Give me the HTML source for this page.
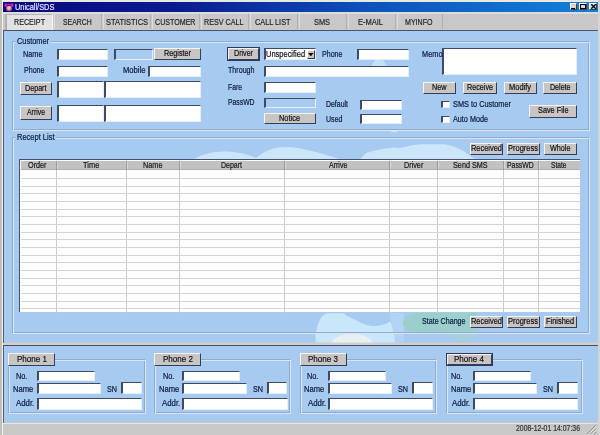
<!DOCTYPE html><html><head><meta charset="utf-8"><title>Unicall/SDS</title><style>
html,body{margin:0;padding:0;background:#c8c8c8;overflow:hidden}
#w{position:relative;width:600px;height:435px;overflow:hidden;font-family:"Liberation Sans",sans-serif}
#w div,#w svg,#w span{position:absolute}
#w span{white-space:nowrap;line-height:1;transform-origin:0 50%;display:block;filter:blur(0.3px);-webkit-text-stroke:0.2px currentColor}
</style></head><body><div id="w">
<div style="left:0px;top:0px;width:600px;height:435px;background:#c8c8c8;"></div>
<div style="left:0px;top:0px;width:600px;height:2px;background:#e8e8e4;"></div>
<div style="left:0px;top:0px;width:2px;height:435px;background:#c2beba;"></div>
<div style="left:2px;top:0px;width:1.2px;height:435px;background:#f2f2f2;"></div>
<div style="left:3px;top:2px;width:595.6px;height:10px;background:linear-gradient(90deg,#08087c 0%,#0a1c90 30%,#0c50b8 60%,#1480d8 100%);"></div>
<svg style="left:4px;top:3px;width:10px;height:9px" viewBox="0 0 10 9"><rect x="0.6" y="0.6" width="2.6" height="3.2" fill="#f010c8"/><rect x="6.6" y="0.6" width="2.6" height="3.2" fill="#f010c8"/><rect x="3.2" y="0.8" width="3.4" height="1.3" fill="#b828a8"/><ellipse cx="5" cy="5.5" rx="3.1" ry="2.8" fill="#a85098"/><circle cx="5" cy="5" r="1.9" fill="#e2c494"/></svg>
<div style="left:569.5px;top:3px;width:7.2px;height:7.2px;background:#d8d4d0;box-sizing:border-box;border-top:1px solid #fff;border-left:1px solid #fff;border-right:1px solid #404040;border-bottom:1px solid #404040;"></div>
<div style="left:579px;top:3px;width:7.8px;height:7.2px;background:#d8d4d0;box-sizing:border-box;border-top:1px solid #fff;border-left:1px solid #fff;border-right:1px solid #404040;border-bottom:1px solid #404040;"></div>
<div style="left:589px;top:3px;width:7.9px;height:7.2px;background:#d8d4d0;box-sizing:border-box;border-top:1px solid #fff;border-left:1px solid #fff;border-right:1px solid #404040;border-bottom:1px solid #404040;"></div>
<div style="left:571px;top:8px;width:3.5px;height:1.2px;background:#000;"></div>
<div style="left:580.3px;top:4.4px;width:5.4px;height:4.6px;box-sizing:border-box;border:0.9px solid #000;border-top:1.7px solid #000;"></div>
<svg style="left:590.5px;top:4.3px;width:5px;height:5px" viewBox="0 0 5 5"><path d="M0.3 0.3L4.7 4.7M4.7 0.3L0.3 4.7" stroke="#000" stroke-width="1.3"/></svg>
<div style="left:3px;top:12px;width:595px;height:19px;background:#c8c8c8;"></div>
<div style="left:3px;top:12px;width:595px;height:1.6px;background:#dcdcdc;"></div>
<div style="left:5.3px;top:14px;width:47.7px;height:16px;background:#e2e2e2;box-sizing:border-box;border-left:2px solid #b0b0b0;border-top:1px solid #b4b4b4;border-right:1px solid #f8f8f8;"></div>
<div style="left:54px;top:14px;width:48px;height:15px;box-sizing:border-box;border-right:1px solid #b0b0b0;border-left:1px solid #dcdcdc;"></div>
<div style="left:103px;top:14px;width:48px;height:15px;box-sizing:border-box;border-right:1px solid #b0b0b0;border-left:1px solid #dcdcdc;"></div>
<div style="left:152px;top:14px;width:48px;height:15px;box-sizing:border-box;border-right:1px solid #b0b0b0;border-left:1px solid #dcdcdc;"></div>
<div style="left:201px;top:14px;width:47.5px;height:15px;box-sizing:border-box;border-right:1px solid #b0b0b0;border-left:1px solid #dcdcdc;"></div>
<div style="left:249.5px;top:14px;width:48px;height:15px;box-sizing:border-box;border-right:1px solid #b0b0b0;border-left:1px solid #dcdcdc;"></div>
<div style="left:298.5px;top:14px;width:48.5px;height:15px;box-sizing:border-box;border-right:1px solid #b0b0b0;border-left:1px solid #dcdcdc;"></div>
<div style="left:348px;top:14px;width:47.7px;height:15px;box-sizing:border-box;border-right:1px solid #b0b0b0;border-left:1px solid #dcdcdc;"></div>
<div style="left:396.7px;top:14px;width:46px;height:15px;box-sizing:border-box;border-right:1px solid #b0b0b0;border-left:1px solid #dcdcdc;"></div>
<div style="left:3px;top:30.2px;width:595px;height:1.1px;background:#4c5464;"></div>
<div style="left:4px;top:31.3px;width:594px;height:311.2px;background:#a6caf0;"></div>
<div style="left:3.2px;top:31px;width:1.1px;height:314px;background:#545c74;"></div>
<svg style="left:4px;top:31px;width:594px;height:312px" viewBox="4 31 594 312">
<path d="M193 160 C200 155,212 151.5,223 151.5 C236 151.5,248 154,256 158 C264 151,274 147,285 147 C300 147,322 153,342 160 Z" fill="#cbe6f9"/>
<path d="M360 160 C363 155,367 152,371 151.5 C380 149,388 148,394 147.5 L400 148 C408 146.5,414 144.5,421 144.3 L445 144.3 C452 145.5,458 148,464 151.5 C469 154.5,472 157.5,476 160 Z" fill="#cbe6f9"/>
<path d="M371 66 L375 60 L383 60 L387 66 Z" fill="#c4e0f8"/>
<ellipse cx="394" cy="130.6" rx="5" ry="1.1" fill="#e2f0fc"/>
<path d="M390 313 L404 313 L404 342.5 L394 342.5 Z" fill="#b2d4f4"/>
<path d="M315.5 342.5 C315 335,316.5 328,318.5 323 C320.5 318,323 314.5,327.5 313.2 L344 313.2 L346 315.5 C348 316.5,350.5 317.5,353 318.8 C359 322,365 325,371 326 C378 326.5,385 324.5,390.6 321.5 C393 328,394.5 335,395 342.5 Z" fill="#c9e7fb"/>
<path d="M402.6 323 C403 317,410 313,424 312.6 L476 312.6 L476 333.5 C460 334,432 334,416 332.5 C408 331,402.6 328,402.6 323 Z" fill="#9ccfcc"/>
<path d="M446 333.5 L474 333.5 L474 339 C464 340,452 339,446 336 Z" fill="#a6d0dc"/>
<path d="M332 342.5 C334 337,342 334,352 334 C362 334,370 337,372.5 342.5 Z" fill="#eef0ec" opacity="0.85"/>
</svg>
<div style="left:12px;top:41px;width:577px;height:89px;box-sizing:border-box;border:1px solid #94aac8;"></div>
<div style="left:13px;top:42px;width:577px;height:89px;box-sizing:border-box;border:1px solid #d4e6f8;"></div>
<div style="left:15px;top:38px;width:36px;height:7px;background:#a6caf0;"></div>
<div style="left:56.5px;top:49px;width:51.5px;height:11px;background:#fff;box-sizing:border-box;border-top:1.6px solid #414a64;border-left:2px solid #414a64;border-right:1px solid #e6eef6;border-bottom:1px solid #e6eef6;"></div>
<div style="left:113.5px;top:49px;width:39px;height:11px;background:#a6caf0;box-sizing:border-box;border-top:1.6px solid #414a64;border-left:2px solid #414a64;border-right:1px solid #e6eef6;border-bottom:1px solid #e6eef6;"></div>
<div style="left:153.6px;top:47.5px;width:47.2px;height:12.5px;background:#c9c5c2;box-sizing:border-box;border-top:1px solid #f4f4f4;border-left:1px solid #f4f4f4;border-right:1.5px solid #323e5c;border-bottom:1.5px solid #323e5c;"></div>
<div style="left:56.5px;top:66px;width:51.5px;height:10.5px;background:#fff;box-sizing:border-box;border-top:1.6px solid #414a64;border-left:2px solid #414a64;border-right:1px solid #e6eef6;border-bottom:1px solid #e6eef6;"></div>
<div style="left:148px;top:66px;width:52.5px;height:10.5px;background:#fff;box-sizing:border-box;border-top:1.6px solid #414a64;border-left:2px solid #414a64;border-right:1px solid #e6eef6;border-bottom:1px solid #e6eef6;"></div>
<div style="left:19.5px;top:82px;width:32.5px;height:12.5px;background:#c9c5c2;box-sizing:border-box;border-top:1px solid #f4f4f4;border-left:1px solid #f4f4f4;border-right:1.5px solid #323e5c;border-bottom:1.5px solid #323e5c;"></div>
<div style="left:56.5px;top:81px;width:47px;height:16.5px;background:#fff;box-sizing:border-box;border-top:1.6px solid #414a64;border-left:2px solid #414a64;border-right:1px solid #e6eef6;border-bottom:1px solid #e6eef6;"></div>
<div style="left:104px;top:81px;width:96.5px;height:16.5px;background:#fff;box-sizing:border-box;border-top:1.6px solid #414a64;border-left:2px solid #414a64;border-right:1px solid #e6eef6;border-bottom:1px solid #e6eef6;"></div>
<div style="left:19.5px;top:106px;width:32.5px;height:13.5px;background:#c9c5c2;box-sizing:border-box;border-top:1px solid #f4f4f4;border-left:1px solid #f4f4f4;border-right:1.5px solid #323e5c;border-bottom:1.5px solid #323e5c;"></div>
<div style="left:56.5px;top:105px;width:47px;height:17px;background:#fff;box-sizing:border-box;border-top:1.6px solid #414a64;border-left:2px solid #414a64;border-right:1px solid #e6eef6;border-bottom:1px solid #e6eef6;"></div>
<div style="left:104px;top:105px;width:96.5px;height:17px;background:#fff;box-sizing:border-box;border-top:1.6px solid #414a64;border-left:2px solid #414a64;border-right:1px solid #e6eef6;border-bottom:1px solid #e6eef6;"></div>
<div style="left:226.5px;top:47px;width:33.5px;height:13.5px;background:#2e3a5c;"></div>
<div style="left:227.5px;top:48px;width:31.5px;height:11.5px;background:#c9c5c2;box-sizing:border-box;border-top:1px solid #f4f4f4;border-left:1px solid #f4f4f4;border-right:1.5px solid #323e5c;border-bottom:1.5px solid #323e5c;"></div>
<div style="left:264px;top:48px;width:52px;height:11.5px;background:#fff;box-sizing:border-box;border-top:1.6px solid #414a64;border-left:2px solid #414a64;border-right:1px solid #e6eef6;border-bottom:1px solid #e6eef6;"></div>
<div style="left:306.6px;top:49.5px;width:8.8px;height:9.4px;background:#c9c5c2;box-sizing:border-box;border-top:1px solid #fff;border-left:1px solid #fff;border-right:1.3px solid #303848;border-bottom:1.3px solid #303848;"></div>
<svg style="left:308.2px;top:52.8px;width:5.6px;height:3.3px" viewBox="0 0 5 3"><path d="M0 0H5L2.5 3Z" fill="#000"/></svg>
<div style="left:357px;top:49px;width:52px;height:10.5px;background:#fff;box-sizing:border-box;border-top:1.6px solid #414a64;border-left:2px solid #414a64;border-right:1px solid #e6eef6;border-bottom:1px solid #e6eef6;"></div>
<div style="left:442px;top:48px;width:134.5px;height:27px;background:#fff;box-sizing:border-box;border-top:1.6px solid #414a64;border-left:2px solid #414a64;border-right:1px solid #e6eef6;border-bottom:1px solid #e6eef6;"></div>
<div style="left:264px;top:66px;width:145px;height:10.5px;background:#fff;box-sizing:border-box;border-top:1.6px solid #414a64;border-left:2px solid #414a64;border-right:1px solid #e6eef6;border-bottom:1px solid #e6eef6;"></div>
<div style="left:264px;top:82px;width:51.5px;height:10.5px;background:#fff;box-sizing:border-box;border-top:1.6px solid #414a64;border-left:2px solid #414a64;border-right:1px solid #e6eef6;border-bottom:1px solid #e6eef6;"></div>
<div style="left:264px;top:97.5px;width:51.5px;height:10px;background:#a6caf0;box-sizing:border-box;border-top:1.6px solid #414a64;border-left:2px solid #414a64;border-right:1px solid #e6eef6;border-bottom:1px solid #e6eef6;"></div>
<div style="left:263.9px;top:112.5px;width:52.1px;height:11.5px;background:#c9c5c2;box-sizing:border-box;border-top:1px solid #f4f4f4;border-left:1px solid #f4f4f4;border-right:1.5px solid #323e5c;border-bottom:1.5px solid #323e5c;"></div>
<div style="left:360px;top:99.6px;width:41.5px;height:10.6px;background:#fff;box-sizing:border-box;border-top:1.6px solid #414a64;border-left:2px solid #414a64;border-right:1px solid #e6eef6;border-bottom:1px solid #e6eef6;"></div>
<div style="left:360px;top:113.5px;width:41.5px;height:10.4px;background:#fff;box-sizing:border-box;border-top:1.6px solid #414a64;border-left:2px solid #414a64;border-right:1px solid #e6eef6;border-bottom:1px solid #e6eef6;"></div>
<div style="left:423px;top:82px;width:32.5px;height:12px;background:#c9c5c2;box-sizing:border-box;border-top:1px solid #f4f4f4;border-left:1px solid #f4f4f4;border-right:1.5px solid #323e5c;border-bottom:1.5px solid #323e5c;"></div>
<div style="left:463px;top:82px;width:33.5px;height:12px;background:#c9c5c2;box-sizing:border-box;border-top:1px solid #f4f4f4;border-left:1px solid #f4f4f4;border-right:1.5px solid #323e5c;border-bottom:1.5px solid #323e5c;"></div>
<div style="left:503.5px;top:82px;width:33px;height:12px;background:#c9c5c2;box-sizing:border-box;border-top:1px solid #f4f4f4;border-left:1px solid #f4f4f4;border-right:1.5px solid #323e5c;border-bottom:1.5px solid #323e5c;"></div>
<div style="left:543px;top:82px;width:34px;height:12px;background:#c9c5c2;box-sizing:border-box;border-top:1px solid #f4f4f4;border-left:1px solid #f4f4f4;border-right:1.5px solid #323e5c;border-bottom:1.5px solid #323e5c;"></div>
<div style="left:441.2px;top:100.5px;width:9px;height:7.5px;background:#fff;box-sizing:border-box;border-top:1.6px solid #414a64;border-left:2px solid #414a64;border-right:1px solid #e6eef6;border-bottom:1px solid #e6eef6;"></div>
<div style="left:441.2px;top:116px;width:9px;height:7.4px;background:#fff;box-sizing:border-box;border-top:1.6px solid #414a64;border-left:2px solid #414a64;border-right:1px solid #e6eef6;border-bottom:1px solid #e6eef6;"></div>
<div style="left:528.5px;top:104.5px;width:48.5px;height:13px;background:#c9c5c2;box-sizing:border-box;border-top:1px solid #f4f4f4;border-left:1px solid #f4f4f4;border-right:1.5px solid #323e5c;border-bottom:1.5px solid #323e5c;"></div>
<div style="left:12px;top:137px;width:577px;height:196px;box-sizing:border-box;border:1px solid #94aac8;"></div>
<div style="left:13px;top:138px;width:577px;height:196px;box-sizing:border-box;border:1px solid #d4e6f8;"></div>
<div style="left:14.5px;top:134px;width:41.5px;height:7px;background:#a6caf0;"></div>
<div style="left:470px;top:143px;width:32.5px;height:12px;background:#c9c5c2;box-sizing:border-box;border-top:1px solid #f4f4f4;border-left:1px solid #f4f4f4;border-right:1.5px solid #323e5c;border-bottom:1.5px solid #323e5c;"></div>
<div style="left:507px;top:143px;width:32.5px;height:12px;background:#c9c5c2;box-sizing:border-box;border-top:1px solid #f4f4f4;border-left:1px solid #f4f4f4;border-right:1.5px solid #323e5c;border-bottom:1.5px solid #323e5c;"></div>
<div style="left:543.5px;top:143px;width:33.5px;height:12px;background:#c9c5c2;box-sizing:border-box;border-top:1px solid #f4f4f4;border-left:1px solid #f4f4f4;border-right:1.5px solid #323e5c;border-bottom:1.5px solid #323e5c;"></div>
<div style="left:19.2px;top:159.4px;width:560.8px;height:153.1px;background:#fdfdfd;box-sizing:border-box;border-top:1.8px solid #44506c;border-left:1.8px solid #44506c;"></div>
<div style="left:21px;top:161.2px;width:559px;height:8.8px;background:#c2c2c2;border-bottom:1px solid #b0b0b0;box-sizing:border-box;"></div>
<div style="left:55.6px;top:161px;width:1.1px;height:151.5px;background:#cacaca;"></div>
<div style="left:55.5px;top:161.2px;width:1.1px;height:8.8px;background:#9c9c9c;"></div>
<div style="left:56.6px;top:161.2px;width:0.9px;height:8.3px;background:#d6d6d6;"></div>
<div style="left:126.1px;top:161px;width:1.1px;height:151.5px;background:#cacaca;"></div>
<div style="left:126px;top:161.2px;width:1.1px;height:8.8px;background:#9c9c9c;"></div>
<div style="left:127.1px;top:161.2px;width:0.9px;height:8.3px;background:#d6d6d6;"></div>
<div style="left:178.7px;top:161px;width:1.1px;height:151.5px;background:#cacaca;"></div>
<div style="left:178.6px;top:161.2px;width:1.1px;height:8.8px;background:#9c9c9c;"></div>
<div style="left:179.7px;top:161.2px;width:0.9px;height:8.3px;background:#d6d6d6;"></div>
<div style="left:284.4px;top:161px;width:1.1px;height:151.5px;background:#cacaca;"></div>
<div style="left:284.3px;top:161.2px;width:1.1px;height:8.8px;background:#9c9c9c;"></div>
<div style="left:285.4px;top:161.2px;width:0.9px;height:8.3px;background:#d6d6d6;"></div>
<div style="left:389.4px;top:161px;width:1.1px;height:151.5px;background:#cacaca;"></div>
<div style="left:389.3px;top:161.2px;width:1.1px;height:8.8px;background:#9c9c9c;"></div>
<div style="left:390.4px;top:161.2px;width:0.9px;height:8.3px;background:#d6d6d6;"></div>
<div style="left:437.1px;top:161px;width:1.1px;height:151.5px;background:#cacaca;"></div>
<div style="left:437px;top:161.2px;width:1.1px;height:8.8px;background:#9c9c9c;"></div>
<div style="left:438.1px;top:161.2px;width:0.9px;height:8.3px;background:#d6d6d6;"></div>
<div style="left:503.1px;top:161px;width:1.1px;height:151.5px;background:#cacaca;"></div>
<div style="left:503px;top:161.2px;width:1.1px;height:8.8px;background:#9c9c9c;"></div>
<div style="left:504.1px;top:161.2px;width:0.9px;height:8.3px;background:#d6d6d6;"></div>
<div style="left:538.1px;top:161px;width:1.1px;height:151.5px;background:#cacaca;"></div>
<div style="left:538px;top:161.2px;width:1.1px;height:8.8px;background:#9c9c9c;"></div>
<div style="left:539.1px;top:161.2px;width:0.9px;height:8.3px;background:#d6d6d6;"></div>
<div style="left:21px;top:178px;width:559px;height:1.1px;background:#d4d4d4;"></div>
<div style="left:21px;top:185.66px;width:559px;height:1.1px;background:#d4d4d4;"></div>
<div style="left:21px;top:193.32px;width:559px;height:1.1px;background:#d4d4d4;"></div>
<div style="left:21px;top:200.98px;width:559px;height:1.1px;background:#d4d4d4;"></div>
<div style="left:21px;top:208.64px;width:559px;height:1.1px;background:#d4d4d4;"></div>
<div style="left:21px;top:216.3px;width:559px;height:1.1px;background:#d4d4d4;"></div>
<div style="left:21px;top:223.96px;width:559px;height:1.1px;background:#d4d4d4;"></div>
<div style="left:21px;top:231.62px;width:559px;height:1.1px;background:#d4d4d4;"></div>
<div style="left:21px;top:239.28px;width:559px;height:1.1px;background:#d4d4d4;"></div>
<div style="left:21px;top:246.94px;width:559px;height:1.1px;background:#d4d4d4;"></div>
<div style="left:21px;top:254.6px;width:559px;height:1.1px;background:#d4d4d4;"></div>
<div style="left:21px;top:262.26px;width:559px;height:1.1px;background:#d4d4d4;"></div>
<div style="left:21px;top:269.92px;width:559px;height:1.1px;background:#d4d4d4;"></div>
<div style="left:21px;top:277.58px;width:559px;height:1.1px;background:#d4d4d4;"></div>
<div style="left:21px;top:285.24px;width:559px;height:1.1px;background:#d4d4d4;"></div>
<div style="left:21px;top:292.9px;width:559px;height:1.1px;background:#d4d4d4;"></div>
<div style="left:21px;top:300.56px;width:559px;height:1.1px;background:#d4d4d4;"></div>
<div style="left:21px;top:308.22px;width:559px;height:1.1px;background:#d4d4d4;"></div>
<div style="left:470px;top:316px;width:32.5px;height:12px;background:#c9c5c2;box-sizing:border-box;border-top:1px solid #f4f4f4;border-left:1px solid #f4f4f4;border-right:1.5px solid #323e5c;border-bottom:1.5px solid #323e5c;"></div>
<div style="left:507px;top:316px;width:32.5px;height:12px;background:#c9c5c2;box-sizing:border-box;border-top:1px solid #f4f4f4;border-left:1px solid #f4f4f4;border-right:1.5px solid #323e5c;border-bottom:1.5px solid #323e5c;"></div>
<div style="left:543.5px;top:316px;width:33.5px;height:12px;background:#c9c5c2;box-sizing:border-box;border-top:1px solid #f4f4f4;border-left:1px solid #f4f4f4;border-right:1.5px solid #323e5c;border-bottom:1.5px solid #323e5c;"></div>
<div style="left:3px;top:342.5px;width:595px;height:2.5px;background:#cfcfcf;"></div>
<div style="left:3px;top:345px;width:595px;height:1.3px;background:#46506a;"></div>
<div style="left:4.3px;top:346.3px;width:593.7px;height:76.2px;background:#a6caf0;"></div>
<div style="left:3.2px;top:346px;width:1.1px;height:76.5px;background:#545c74;"></div>
<div style="left:8.4px;top:359.2px;width:136.3px;height:53.6px;box-sizing:border-box;border:1px solid #94aac8;"></div>
<div style="left:9.4px;top:360.2px;width:136.3px;height:53.6px;box-sizing:border-box;border:1px solid #d4e6f8;"></div>
<div style="left:8.4px;top:353px;width:47px;height:12.7px;background:#c9c5c2;box-sizing:border-box;border-top:1px solid #f4f4f4;border-left:1px solid #f4f4f4;border-right:1.5px solid #323e5c;border-bottom:1.5px solid #323e5c;"></div>
<div style="left:36.5px;top:370.5px;width:58.3px;height:10.7px;background:#fff;box-sizing:border-box;border-top:1.6px solid #414a64;border-left:2px solid #414a64;border-right:1px solid #e6eef6;border-bottom:1px solid #e6eef6;"></div>
<div style="left:36.5px;top:383.2px;width:64.5px;height:11.2px;background:#fff;box-sizing:border-box;border-top:1.6px solid #414a64;border-left:2px solid #414a64;border-right:1px solid #e6eef6;border-bottom:1px solid #e6eef6;"></div>
<div style="left:121.3px;top:382px;width:20.7px;height:12.4px;background:#fff;box-sizing:border-box;border-top:1.6px solid #414a64;border-left:2px solid #414a64;border-right:1px solid #e6eef6;border-bottom:1px solid #e6eef6;"></div>
<div style="left:36.5px;top:398px;width:105.7px;height:11.8px;background:#fff;box-sizing:border-box;border-top:1.6px solid #414a64;border-left:2px solid #414a64;border-right:1px solid #e6eef6;border-bottom:1px solid #e6eef6;"></div>
<div style="left:154.15px;top:359.2px;width:136.3px;height:53.6px;box-sizing:border-box;border:1px solid #94aac8;"></div>
<div style="left:155.15px;top:360.2px;width:136.3px;height:53.6px;box-sizing:border-box;border:1px solid #d4e6f8;"></div>
<div style="left:154.15px;top:353px;width:47px;height:12.7px;background:#c9c5c2;box-sizing:border-box;border-top:1px solid #f4f4f4;border-left:1px solid #f4f4f4;border-right:1.5px solid #323e5c;border-bottom:1.5px solid #323e5c;"></div>
<div style="left:182px;top:370.5px;width:58.3px;height:10.7px;background:#fff;box-sizing:border-box;border-top:1.6px solid #414a64;border-left:2px solid #414a64;border-right:1px solid #e6eef6;border-bottom:1px solid #e6eef6;"></div>
<div style="left:182px;top:383.2px;width:64.5px;height:11.2px;background:#fff;box-sizing:border-box;border-top:1.6px solid #414a64;border-left:2px solid #414a64;border-right:1px solid #e6eef6;border-bottom:1px solid #e6eef6;"></div>
<div style="left:266.8px;top:382px;width:20.7px;height:12.4px;background:#fff;box-sizing:border-box;border-top:1.6px solid #414a64;border-left:2px solid #414a64;border-right:1px solid #e6eef6;border-bottom:1px solid #e6eef6;"></div>
<div style="left:182px;top:398px;width:105.7px;height:11.8px;background:#fff;box-sizing:border-box;border-top:1.6px solid #414a64;border-left:2px solid #414a64;border-right:1px solid #e6eef6;border-bottom:1px solid #e6eef6;"></div>
<div style="left:299.9px;top:359.2px;width:136.3px;height:53.6px;box-sizing:border-box;border:1px solid #94aac8;"></div>
<div style="left:300.9px;top:360.2px;width:136.3px;height:53.6px;box-sizing:border-box;border:1px solid #d4e6f8;"></div>
<div style="left:299.9px;top:353px;width:47px;height:12.7px;background:#c9c5c2;box-sizing:border-box;border-top:1px solid #f4f4f4;border-left:1px solid #f4f4f4;border-right:1.5px solid #323e5c;border-bottom:1.5px solid #323e5c;"></div>
<div style="left:327.5px;top:370.5px;width:58.3px;height:10.7px;background:#fff;box-sizing:border-box;border-top:1.6px solid #414a64;border-left:2px solid #414a64;border-right:1px solid #e6eef6;border-bottom:1px solid #e6eef6;"></div>
<div style="left:327.5px;top:383.2px;width:64.5px;height:11.2px;background:#fff;box-sizing:border-box;border-top:1.6px solid #414a64;border-left:2px solid #414a64;border-right:1px solid #e6eef6;border-bottom:1px solid #e6eef6;"></div>
<div style="left:412.3px;top:382px;width:20.7px;height:12.4px;background:#fff;box-sizing:border-box;border-top:1.6px solid #414a64;border-left:2px solid #414a64;border-right:1px solid #e6eef6;border-bottom:1px solid #e6eef6;"></div>
<div style="left:327.5px;top:398px;width:105.7px;height:11.8px;background:#fff;box-sizing:border-box;border-top:1.6px solid #414a64;border-left:2px solid #414a64;border-right:1px solid #e6eef6;border-bottom:1px solid #e6eef6;"></div>
<div style="left:445.65px;top:359.2px;width:136.3px;height:53.6px;box-sizing:border-box;border:1px solid #94aac8;"></div>
<div style="left:446.65px;top:360.2px;width:136.3px;height:53.6px;box-sizing:border-box;border:1px solid #d4e6f8;"></div>
<div style="left:445.65px;top:353px;width:47px;height:12.7px;background:#2e3a5c;"></div>
<div style="left:446.65px;top:354px;width:45px;height:10.7px;background:#c9c5c2;box-sizing:border-box;border-top:1px solid #f4f4f4;border-left:1px solid #f4f4f4;border-right:1.5px solid #323e5c;border-bottom:1.5px solid #323e5c;"></div>
<div style="left:472.5px;top:370.5px;width:58.3px;height:10.7px;background:#fff;box-sizing:border-box;border-top:1.6px solid #414a64;border-left:2px solid #414a64;border-right:1px solid #e6eef6;border-bottom:1px solid #e6eef6;"></div>
<div style="left:472.5px;top:383.2px;width:64.5px;height:11.2px;background:#fff;box-sizing:border-box;border-top:1.6px solid #414a64;border-left:2px solid #414a64;border-right:1px solid #e6eef6;border-bottom:1px solid #e6eef6;"></div>
<div style="left:557.3px;top:382px;width:20.7px;height:12.4px;background:#fff;box-sizing:border-box;border-top:1.6px solid #414a64;border-left:2px solid #414a64;border-right:1px solid #e6eef6;border-bottom:1px solid #e6eef6;"></div>
<div style="left:472.5px;top:398px;width:105.7px;height:11.8px;background:#fff;box-sizing:border-box;border-top:1.6px solid #414a64;border-left:2px solid #414a64;border-right:1px solid #e6eef6;border-bottom:1px solid #e6eef6;"></div>
<div style="left:3px;top:422.5px;width:595px;height:12.5px;background:#c8c8c8;"></div>
<div style="left:3px;top:422.5px;width:595px;height:1px;background:#e4e4e4;"></div>
<svg style="left:586px;top:424px;width:11px;height:11px" viewBox="0 0 11 11"><path d="M10 1L1 10M10 4.5L4.5 10M10 8L8 10" stroke="#909090" stroke-width="1"/><path d="M10.8 1.8L1.8 10.8M10.8 5.3L5.3 10.8" stroke="#f4f4f4" stroke-width="0.8"/></svg>
<div style="left:598.4px;top:0px;width:1.6px;height:435px;background:#d4d4d4;"></div>
<span style="left:14.70px;top:2.75px;font-size:8.3px;color:#e4e4ff;font-weight:normal;transform:scaleX(0.8878)">Unicall/SDS</span>
<span style="left:13.50px;top:17.90px;font-size:9.0px;color:#262626;font-weight:normal;transform:scaleX(0.7946)">RECEIPT</span>
<span style="left:63.30px;top:17.90px;font-size:9.0px;color:#262626;font-weight:normal;transform:scaleX(0.7650)">SEARCH</span>
<span style="left:105.50px;top:17.90px;font-size:9.0px;color:#262626;font-weight:normal;transform:scaleX(0.8289)">STATISTICS</span>
<span style="left:155.00px;top:17.90px;font-size:9.0px;color:#262626;font-weight:normal;transform:scaleX(0.7888)">CUSTOMER</span>
<span style="left:204.00px;top:17.90px;font-size:9.0px;color:#262626;font-weight:normal;transform:scaleX(0.7975)">RESV CALL</span>
<span style="left:255.00px;top:17.90px;font-size:9.0px;color:#262626;font-weight:normal;transform:scaleX(0.8126)">CALL LIST</span>
<span style="left:313.50px;top:17.90px;font-size:9.0px;color:#262626;font-weight:normal;transform:scaleX(0.8199)">SMS</span>
<span style="left:357.50px;top:17.90px;font-size:9.0px;color:#262626;font-weight:normal;transform:scaleX(0.8329)">E-MAIL</span>
<span style="left:405.00px;top:17.90px;font-size:9.0px;color:#262626;font-weight:normal;transform:scaleX(0.7857)">MYINFO</span>
<span style="left:17.00px;top:37.00px;font-size:8.6px;color:#0c1a3c;font-weight:normal;transform:scaleX(0.8591)">Customer</span>
<span style="left:23.00px;top:49.70px;font-size:8.6px;color:#0c1a3c;font-weight:normal;transform:scaleX(0.8501)">Name</span>
<span style="left:163.70px;top:49.10px;font-size:8.9px;color:#101018;font-weight:normal;transform:scaleX(0.8166)">Register</span>
<span style="left:24.00px;top:66.20px;font-size:8.6px;color:#0c1a3c;font-weight:normal;transform:scaleX(0.8246)">Phone</span>
<span style="left:123.00px;top:66.20px;font-size:8.6px;color:#0c1a3c;font-weight:normal;transform:scaleX(0.8883)">Mobile</span>
<span style="left:25.00px;top:83.60px;font-size:8.9px;color:#101018;font-weight:normal;transform:scaleX(0.8070)">Depart</span>
<span style="left:26.75px;top:108.10px;font-size:8.9px;color:#101018;font-weight:normal;transform:scaleX(0.7763)">Arrive</span>
<span style="left:233.75px;top:49.10px;font-size:8.9px;color:#101018;font-weight:normal;transform:scaleX(0.8026)">Driver</span>
<span style="left:266.20px;top:49.80px;font-size:8.6px;color:#101018;font-weight:normal;transform:scaleX(0.8707)">Unspecified</span>
<span style="left:322.00px;top:49.70px;font-size:8.6px;color:#0c1a3c;font-weight:normal;transform:scaleX(0.8246)">Phone</span>
<span style="left:421.50px;top:49.70px;font-size:8.6px;color:#0c1a3c;font-weight:normal;transform:scaleX(0.8581)">Memo</span>
<span style="left:228.00px;top:66.20px;font-size:8.6px;color:#0c1a3c;font-weight:normal;transform:scaleX(0.8277)">Through</span>
<span style="left:228.00px;top:82.70px;font-size:8.6px;color:#0c1a3c;font-weight:normal;transform:scaleX(0.7922)">Fare</span>
<span style="left:228.00px;top:98.20px;font-size:8.6px;color:#0c1a3c;font-weight:normal;transform:scaleX(0.7925)">PassWD</span>
<span style="left:279.45px;top:113.60px;font-size:8.9px;color:#101018;font-weight:normal;transform:scaleX(0.8348)">Notice</span>
<span style="left:326.00px;top:99.70px;font-size:8.6px;color:#0c1a3c;font-weight:normal;transform:scaleX(0.8078)">Default</span>
<span style="left:326.00px;top:114.50px;font-size:8.6px;color:#0c1a3c;font-weight:normal;transform:scaleX(0.8224)">Used</span>
<span style="left:432.00px;top:83.35px;font-size:8.9px;color:#101018;font-weight:normal;transform:scaleX(0.8162)">New</span>
<span style="left:466.75px;top:83.35px;font-size:8.9px;color:#101018;font-weight:normal;transform:scaleX(0.8105)">Receive</span>
<span style="left:509.00px;top:83.35px;font-size:8.9px;color:#101018;font-weight:normal;transform:scaleX(0.8416)">Modify</span>
<span style="left:549.75px;top:83.35px;font-size:8.9px;color:#101018;font-weight:normal;transform:scaleX(0.7990)">Delete</span>
<span style="left:453.00px;top:99.50px;font-size:8.6px;color:#0c1a3c;font-weight:normal;transform:scaleX(0.8551)">SMS to Customer</span>
<span style="left:453.00px;top:114.50px;font-size:8.6px;color:#0c1a3c;font-weight:normal;transform:scaleX(0.8418)">Auto Mode</span>
<span style="left:537.50px;top:106.35px;font-size:8.9px;color:#101018;font-weight:normal;transform:scaleX(0.8243)">Save File</span>
<span style="left:16.50px;top:133.00px;font-size:8.6px;color:#0c1a3c;font-weight:normal;transform:scaleX(0.8721)">Recept List</span>
<span style="left:470.75px;top:144.35px;font-size:8.9px;color:#101018;font-weight:normal;transform:scaleX(0.8378)">Received</span>
<span style="left:508.25px;top:144.35px;font-size:8.9px;color:#101018;font-weight:normal;transform:scaleX(0.8447)">Progress</span>
<span style="left:550.00px;top:144.35px;font-size:8.9px;color:#101018;font-weight:normal;transform:scaleX(0.8149)">Whole</span>
<span style="left:28.45px;top:160.90px;font-size:8.6px;color:#181818;font-weight:normal;transform:scaleX(0.8421)">Order</span>
<span style="left:82.85px;top:160.90px;font-size:8.6px;color:#181818;font-weight:normal;transform:scaleX(0.8679)">Time</span>
<span style="left:142.55px;top:160.90px;font-size:8.6px;color:#181818;font-weight:normal;transform:scaleX(0.8501)">Name</span>
<span style="left:221.20px;top:160.90px;font-size:8.6px;color:#181818;font-weight:normal;transform:scaleX(0.8141)">Depart</span>
<span style="left:328.55px;top:160.90px;font-size:8.6px;color:#181818;font-weight:normal;transform:scaleX(0.8150)">Arrive</span>
<span style="left:404.35px;top:160.90px;font-size:8.6px;color:#181818;font-weight:normal;transform:scaleX(0.8420)">Driver</span>
<span style="left:452.65px;top:160.90px;font-size:8.6px;color:#181818;font-weight:normal;transform:scaleX(0.8444)">Send SMS</span>
<span style="left:507.35px;top:160.90px;font-size:8.6px;color:#181818;font-weight:normal;transform:scaleX(0.7985)">PassWD</span>
<span style="left:550.55px;top:160.90px;font-size:8.6px;color:#181818;font-weight:normal;transform:scaleX(0.7720)">State</span>
<span style="left:422.00px;top:316.70px;font-size:8.6px;color:#0c1a3c;font-weight:normal;transform:scaleX(0.8276)">State Change</span>
<span style="left:470.75px;top:317.35px;font-size:8.9px;color:#101018;font-weight:normal;transform:scaleX(0.8378)">Received</span>
<span style="left:508.25px;top:317.35px;font-size:8.9px;color:#101018;font-weight:normal;transform:scaleX(0.8447)">Progress</span>
<span style="left:546.25px;top:317.35px;font-size:8.9px;color:#101018;font-weight:normal;transform:scaleX(0.8347)">Finished</span>
<span style="left:16.90px;top:354.50px;font-size:9.3px;color:#101018;font-weight:normal;transform:scaleX(0.8660)">Phone 1</span>
<span style="left:15.75px;top:371.80px;font-size:8.6px;color:#0c1a3c;font-weight:normal;transform:scaleX(0.8523)">No.</span>
<span style="left:12.50px;top:385.10px;font-size:8.6px;color:#0c1a3c;font-weight:normal;transform:scaleX(0.8850)">Name</span>
<span style="left:107.40px;top:385.10px;font-size:8.6px;color:#0c1a3c;font-weight:normal;transform:scaleX(0.8366)">SN</span>
<span style="left:15.75px;top:399.30px;font-size:8.6px;color:#0c1a3c;font-weight:normal;transform:scaleX(0.9114)">Addr.</span>
<span style="left:162.65px;top:354.50px;font-size:9.3px;color:#101018;font-weight:normal;transform:scaleX(0.8660)">Phone 2</span>
<span style="left:163.00px;top:371.80px;font-size:8.6px;color:#0c1a3c;font-weight:normal;transform:scaleX(0.8523)">No.</span>
<span style="left:159.25px;top:385.10px;font-size:8.6px;color:#0c1a3c;font-weight:normal;transform:scaleX(0.8850)">Name</span>
<span style="left:252.90px;top:385.10px;font-size:8.6px;color:#0c1a3c;font-weight:normal;transform:scaleX(0.8366)">SN</span>
<span style="left:162.00px;top:399.30px;font-size:8.6px;color:#0c1a3c;font-weight:normal;transform:scaleX(0.9114)">Addr.</span>
<span style="left:308.40px;top:354.50px;font-size:9.3px;color:#101018;font-weight:normal;transform:scaleX(0.8660)">Phone 3</span>
<span style="left:307.00px;top:371.80px;font-size:8.6px;color:#0c1a3c;font-weight:normal;transform:scaleX(0.8523)">No.</span>
<span style="left:303.75px;top:385.10px;font-size:8.6px;color:#0c1a3c;font-weight:normal;transform:scaleX(0.8850)">Name</span>
<span style="left:398.40px;top:385.10px;font-size:8.6px;color:#0c1a3c;font-weight:normal;transform:scaleX(0.8366)">SN</span>
<span style="left:307.50px;top:399.30px;font-size:8.6px;color:#0c1a3c;font-weight:normal;transform:scaleX(0.9114)">Addr.</span>
<span style="left:454.15px;top:354.50px;font-size:9.3px;color:#101018;font-weight:normal;transform:scaleX(0.8660)">Phone 4</span>
<span style="left:451.25px;top:371.80px;font-size:8.6px;color:#0c1a3c;font-weight:normal;transform:scaleX(0.8523)">No.</span>
<span style="left:450.50px;top:385.10px;font-size:8.6px;color:#0c1a3c;font-weight:normal;transform:scaleX(0.8850)">Name</span>
<span style="left:543.40px;top:385.10px;font-size:8.6px;color:#0c1a3c;font-weight:normal;transform:scaleX(0.8366)">SN</span>
<span style="left:452.00px;top:399.30px;font-size:8.6px;color:#0c1a3c;font-weight:normal;transform:scaleX(0.9114)">Addr.</span>
<span style="left:516.00px;top:424.70px;font-size:8.2px;color:#343434;font-weight:normal;transform:scaleX(0.8418)">2008-12-01 14:07:36</span>
</div></body></html>
